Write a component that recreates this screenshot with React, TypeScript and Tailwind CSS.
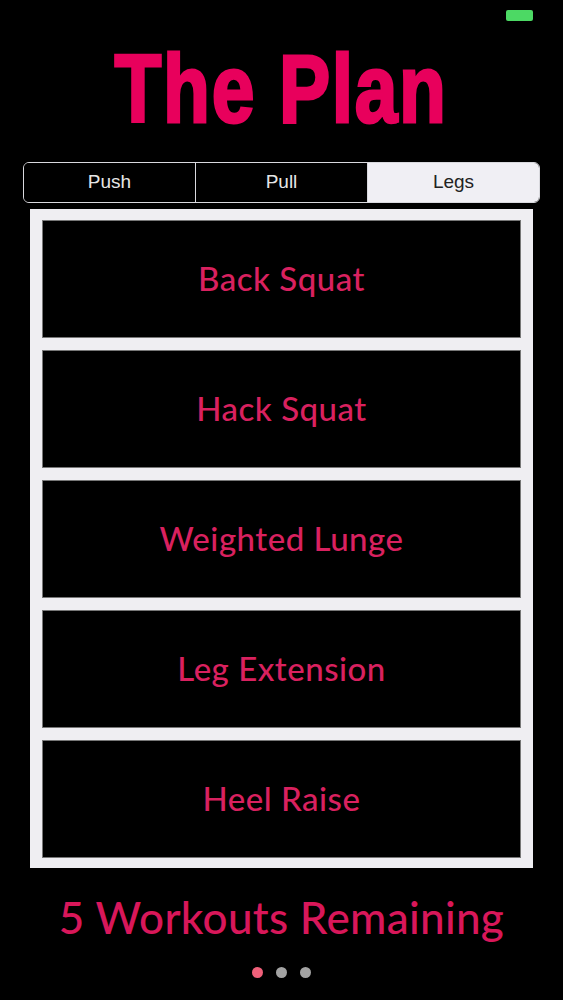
import React from "react";

const workouts = ["Back Squat", "Hack Squat", "Weighted Lunge", "Leg Extension", "Heel Raise"];
const tabs = ["Push", "Pull", "Legs"];

export default function App() {
  const active = 2;

  return (
    <div className="w-[563px] h-[1000px] bg-black flex flex-col items-center overflow-hidden">
      {/* status bar battery */}
      <div className="w-full flex justify-end pt-[10px] pr-[30px]">
        <div className="w-[27px] h-[11px] bg-[#4cd964] rounded-[2px]" />
      </div>

      {/* title */}
      <h1 className="mt-[19px] h-[98px] leading-[98px] text-[96px] font-bold text-[#e8005c] font-['Liberation_Sans',sans-serif] scale-x-[0.8] tracking-[2px] [-webkit-text-stroke:3px_#e8005c] whitespace-nowrap">
        The Plan
      </h1>

      {/* segmented control */}
      <div className="mt-[24px] w-[517px] h-[41px] flex border border-[#d9d9de] rounded-[6px] overflow-hidden font-['Liberation_Sans',sans-serif] text-[19px]">
        {tabs.map((t, i) => (
          <div
            key={t}
            className={
              "flex-1 flex items-center justify-center " +
              (i > 0 ? "border-l border-[#d9d9de] " : "") +
              (i === active ? "bg-[#f0eff4] text-[#222]" : "bg-black text-[#e6e6e6]")
            }
          >
            {t}
          </div>
        ))}
      </div>

      {/* workouts list */}
      <div className="mt-[6px] w-[503px] bg-[#efeef2] pt-[11px] pb-[10px] px-[12px] flex flex-col gap-[12px]">
        {workouts.map((w) => (
          <div
            key={w}
            className="h-[118px] bg-black border border-[#777] flex items-center justify-center text-[#d9215f] text-[33px] font-medium font-['Lato',sans-serif] tracking-[0.5px]"
          >
            {w}
          </div>
        ))}
      </div>

      {/* remaining */}
      <div className="mt-[23px] text-[44px] leading-[52px] text-[#d8175a] font-medium font-['Lato',sans-serif] tracking-[0.3px] whitespace-nowrap">
        5 Workouts Remaining
      </div>

      {/* page dots */}
      <div className="mt-[24px] flex gap-[13px]">
        <div className="w-[11px] h-[11px] rounded-full bg-[#f0607a]" />
        <div className="w-[11px] h-[11px] rounded-full bg-[#a3a3a3]" />
        <div className="w-[11px] h-[11px] rounded-full bg-[#a3a3a3]" />
      </div>
    </div>
  );
}
